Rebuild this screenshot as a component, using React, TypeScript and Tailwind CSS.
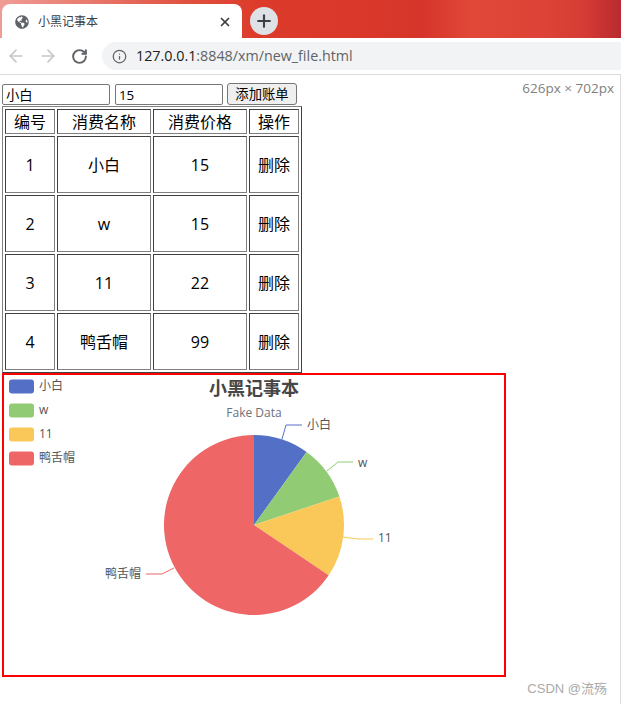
import { ArrowLeft, ArrowRight, Info, Plus, RotateCw, X } from "lucide-react";
import { FaGlobeAmericas } from "react-icons/fa";

const rows = [
  { id: 1, name: "小白", price: 15 },
  { id: 2, name: "w", price: 15 },
  { id: 3, name: "11", price: 22 },
  { id: 4, name: "鸭舌帽", price: 99 },
];

const colors = ["#5470c6", "#91cc75", "#fac858", "#ee6666"];

const labels = [
  { text: "小白", points: "282,439 286,425 302,425", x: 307, y: 425, anchor: "start" },
  { text: "w", points: "327,471 338,462 353,462", x: 358, y: 463, anchor: "start" },
  { text: "11", points: "343,537 358,539 373,539", x: 378, y: 538, anchor: "start" },
  { text: "鸭舌帽", points: "174,568 162,574 146,574", x: 141, y: 574, anchor: "end" },
];

const cell =
  "border border-t-[#404040] border-l-[#404040] border-r-[#808080] border-b-[#808080] p-0 text-center align-middle";

const uiFont = "font-['Open_Sans','Noto_Sans_CJK_SC',sans-serif]";

// slice paths, clockwise from 12 o'clock
function slicePaths(cx: number, cy: number, r: number) {
  const total = rows.reduce((sum, row) => sum + row.price, 0);
  let angle = 0;
  return rows.map((row) => {
    const start = angle;
    angle += (row.price / total) * Math.PI * 2;
    const large = angle - start > Math.PI ? 1 : 0;
    const x1 = cx + r * Math.sin(start);
    const y1 = cy - r * Math.cos(start);
    const x2 = cx + r * Math.sin(angle);
    const y2 = cy - r * Math.cos(angle);
    return `M${cx} ${cy}L${x1} ${y1}A${r} ${r} 0 ${large} 1 ${x2} ${y2}Z`;
  });
}

function BrowserChrome() {
  return (
    <>
      {/* Tab strip */}
      <div className="flex h-[38px] items-stretch pl-[2px] pt-[4px] bg-[linear-gradient(90deg,#ef9c96_0%,#e87a6e_14%,#e0513f_30%,#dc3a2a_42%,#d9372a_60%,#d5352a_68%,#e24838_76%,#dd4336_88%,#d53c34_94%,#b92a30_100%)]">
        <div className="flex w-[240px] items-center rounded-t-[8px] bg-white pl-[13px] pr-[10px] pt-[1px]">
          <FaGlobeAmericas className="h-[14px] w-[14px] text-[#5f6368]" />
          <span className={`ml-[9px] flex-1 text-[12px] text-[#3c4043] ${uiFont}`}>小黑记事本</span>
          <X className="h-[14px] w-[14px] text-[#3c4043]" strokeWidth={3} />
        </div>
        <div className="ml-[8px] mt-[3px] flex h-[28px] w-[28px] items-center justify-center rounded-full bg-[#dee1e6]">
          <Plus className="h-[20px] w-[20px] text-[#3c4043]" strokeWidth={2.5} />
        </div>
      </div>

      {/* Toolbar */}
      <div className="flex h-[37px] items-start border-b border-[#dadce0] bg-white pt-[4px]">
        <div className="flex h-[28px] w-[102px] items-center pl-[6px]">
          <ArrowLeft className="h-[20px] w-[20px] text-[#c4c7ca]" strokeWidth={2} />
          <ArrowRight className="ml-[12px] h-[20px] w-[20px] text-[#c4c7ca]" strokeWidth={2} />
          <RotateCw className="ml-[13px] h-[17px] w-[17px] text-[#5f6368]" strokeWidth={2.75} />
        </div>
        <div className="flex h-[28px] flex-1 items-center rounded-l-full bg-[#f1f3f4] pl-[10px]">
          <Info className="h-[15px] w-[15px] text-[#5f6368]" strokeWidth={2} />
          <span className={`ml-[9px] text-[14.3px] text-[#5f6368] ${uiFont}`}>
            <span className="text-[#202124]">127.0.0.1</span>:8848/xm/new_file.html
          </span>
        </div>
      </div>
    </>
  );
}

function BillForm() {
  const input =
    "h-[21px] w-[108px] rounded-[2px] border border-[#767676] px-[3px] text-[13.33px] text-black font-['Open_Sans','Noto_Sans_CJK_SC',sans-serif]";
  return (
    <div className="flex h-[23px] items-start pl-[2px]">
      <input className={`mt-[1px] ${input}`} value="小白" readOnly />
      <input className={`ml-[5px] mt-[1px] ${input}`} value="15" readOnly />
      <button className="ml-[4px] h-[22px] w-[70px] rounded-[3px] border border-[#767676] bg-[#efefef] text-[13.33px] leading-[18px] text-black font-['Noto_Sans_CJK_SC',sans-serif]">
        添加账单
      </button>
    </div>
  );
}

function BillTable() {
  return (
    <table className="ml-[2px] table-fixed border-separate border-spacing-[2px] border border-t-[#808080] border-l-[#808080] border-r-[#404040] border-b-[#404040] text-[16px] leading-[22px] text-black font-['Open_Sans','Noto_Sans_CJK_SC',sans-serif]">
      <thead>
        <tr className="h-[25px]">
          <th className={`${cell} w-[50px] font-normal`}>编号</th>
          <th className={`${cell} w-[94px] font-normal`}>消费名称</th>
          <th className={`${cell} w-[94px] font-normal`}>消费价格</th>
          <th className={`${cell} w-[50px] font-normal`}>操作</th>
        </tr>
      </thead>
      <tbody>
        {rows.map((row) => (
          <tr key={row.id} className="h-[57px]">
            <td className={cell}>{row.id}</td>
            <td className={cell}>{row.name}</td>
            <td className={cell}>{row.price}</td>
            <td className={cell}>删除</td>
          </tr>
        ))}
      </tbody>
    </table>
  );
}

function PieChart() {
  const paths = slicePaths(254, 525, 90);
  const font = "'Open Sans','Noto Sans CJK SC',sans-serif";
  return (
    <div className="ml-[2px] h-[304px] w-[504px] border-2 border-[#ff0000]">
      <svg width="500" height="300" viewBox="4 375 500 300" fontFamily={font}>
        <text x="254" y="395" textAnchor="middle" fontSize="18" fontWeight="700" fill="#464646">
          小黑记事本
        </text>
        <text x="254" y="417" textAnchor="middle" fontSize="12" fill="#6e7079">
          Fake Data
        </text>

        {rows.map((row, i) => (
          <g key={row.id}>
            <rect x="9" y={379.5 + i * 24} width="25" height="14" rx="3" fill={colors[i]} />
            <text x="39" y={389.5 + i * 24} fontSize="12" fill="#555">
              {row.name}
            </text>
          </g>
        ))}

        {paths.map((d, i) => (
          <path key={i} d={d} fill={colors[i]} />
        ))}

        {labels.map((label, i) => (
          <g key={label.text}>
            <polyline points={label.points} fill="none" stroke={colors[i]} strokeWidth="1" />
            <text
              x={label.x}
              y={label.y + 4}
              textAnchor={label.anchor as "start" | "end"}
              fontSize="12"
              fill="#555"
            >
              {label.text}
            </text>
          </g>
        ))}
      </svg>
    </div>
  );
}

export default function App() {
  return (
    <div className="flex h-[704px] w-[621px] flex-col overflow-hidden bg-white">
      <BrowserChrome />
      <div className="relative flex-1 border-r border-[#dadce0] pt-[8px]">
        <BillForm />
        <BillTable />
        <PieChart />
        {/* devtools size hint */}
        <span className={`absolute right-[6px] top-[3px] text-[13.5px] text-[#808080] ${uiFont}`}>
          626px × 702px
        </span>
        {/* CSDN watermark */}
        <span className="absolute bottom-[6px] right-[13px] text-[13px] text-[#aaa] font-['Liberation_Sans','Noto_Sans_CJK_SC',sans-serif]">
          CSDN @流殇
        </span>
      </div>
    </div>
  );
}
